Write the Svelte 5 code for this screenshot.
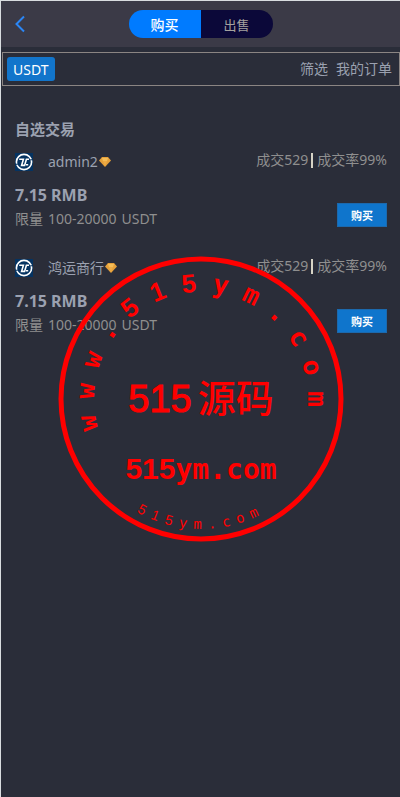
<script lang="ts">
    type Offer = {
        name: string;
        deals: number;
        rate: number;
        price: string;
        limit: string;
    };

    let mode = $state('buy');

    const offers: Offer[] = [
        { name: 'admin2', deals: 529, rate: 99, price: '7.15', limit: '100-20000' },
        { name: '鸿运商行', deals: 529, rate: 99, price: '7.15', limit: '100-20000' },
    ];

    // angle 0 is the top of the seal, clockwise
    const upper = [...'www.515ym.com'].map((char, i) => ({ char, angle: -102 + i * 16 }));
    // angle 0 is the bottom of the seal, counter-clockwise
    const lower = [...'515ym.com'].map((char, i) => ({ char, angle: 28 - i * 6.6 }));

    const isDigit = (char: string) => char >= '0' && char <= '9';
</script>

<div class="page">
    <header>
        <button class="back" aria-label="返回">
            <svg width="10" height="18" viewBox="0 0 10 18">
                <path d="M9 1.5 L1.5 9 L9 16.5" fill="none" stroke="#2b86f5" stroke-width="2" />
            </svg>
        </button>
        <div class="tabs">
            <button class:active={mode === 'buy'} onclick={() => (mode = 'buy')}>购买</button>
            <button class:active={mode === 'sell'} onclick={() => (mode = 'sell')}>出售</button>
        </div>
    </header>

    <nav>
        <button class="coin">USDT</button>
        <div class="links">
            <a href="#filter">筛选</a>
            <a href="#orders">我的订单</a>
        </div>
    </nav>

    <main>
        <h2>自选交易</h2>
        {#each offers as offer}
            <section class="offer">
                <div class="top">
                    <div class="seller">
                        <svg class="avatar" width="18" height="18" viewBox="0 0 18 18">
                            <rect width="18" height="18" fill="#053361" />
                            <circle cx="9" cy="9" r="7.6" fill="none" stroke="#fff" stroke-width="1.6" />
                            <path d="M0 11.5 L3 11 M15 7 L18 6.5" stroke="#053361" stroke-width="1.2" />
                            <path d="M4.2 6.2 H8.4 L6.6 12.4 H9.6 L11.4 6.2 H14 M11 11.8 H13.2" fill="none" stroke="#fff" stroke-width="1.6" />
                        </svg>
                        <span class="name">{offer.name}</span>
                        <svg class="gem" width="12" height="10" viewBox="0 0 12 10">
                            <path d="M3 0 H9 L12 3.5 L6 10 L0 3.5 Z" fill="#e5a03a" />
                            <path d="M3 1 H9 L8 4 H4 Z" fill="#f5bd58" />
                            <path d="M4 4 H8 L6 9 Z" fill="#eeab45" />
                        </svg>
                    </div>
                    <div class="stats">成交{offer.deals}<span class="bar"></span>成交率{offer.rate}%</div>
                </div>
                <div class="bottom">
                    <div>
                        <p class="price">{offer.price} RMB</p>
                        <p class="limit"><span>限量</span><span>{offer.limit}</span><span>USDT</span></p>
                    </div>
                    <button class="buy">购买</button>
                </div>
            </section>
        {/each}
    </main>

    <div class="seal">
        <svg width="286" height="286" viewBox="-143 -143 286 286" fill="#f00" text-anchor="middle">
            <circle r="140" fill="none" stroke="#f00" stroke-width="5" />
            {#each upper as { char, angle }}
                <text class="upper" class:digit={isDigit(char)} y="-107" transform="rotate({angle})">{char}</text>
            {/each}
            <text class="title" y="13"><tspan class="digit">515</tspan><tspan dx="6">源码</tspan></text>
            <text class="domain" y="80"><tspan class="digit">515</tspan>ym.com</text>
            {#each lower as { char, angle }}
                <text class="lower" class:digit={isDigit(char)} y="130" transform="rotate({angle})">{char}</text>
            {/each}
        </svg>
    </div>
</div>

<style>
    :global(body) {
        background: #2a2d39;
    }

    .page {
        position: relative;
        box-sizing: border-box;
        min-height: 100vh;
        border-top: 1px solid #d9dde0;
        border-left: 1px solid #d9dde0;
        background: #2a2d39;
        color: #9ba1b0;
        font-family: 'Noto Sans', 'Noto Sans CJK SC', sans-serif;
        font-size: 14px;
        line-height: 20px;
    }

    button {
        border: 0;
        padding: 0;
        font-family: inherit;
        cursor: pointer;
    }

    header {
        display: grid;
        grid-template-columns: 1fr auto 1fr;
        align-items: center;
        height: 46px;
        background: #3b3a47;
    }

    .back {
        display: flex;
        justify-self: start;
        padding: 0 14px;
        background: none;
    }

    .tabs {
        display: flex;
        overflow: hidden;
        border-radius: 14px;
    }

    .tabs button {
        width: 72px;
        height: 28px;
        background: #0b0839;
        color: #a5a29f;
        font-size: 13px;
    }

    .tabs .active {
        background: #007bff;
        color: #fff;
        font-size: 14px;
        font-weight: 500;
    }

    nav {
        display: flex;
        align-items: center;
        justify-content: space-between;
        box-sizing: border-box;
        height: 34px;
        margin: 5px 0 0 1px;
        padding: 0 7px 0 4px;
        border: 1px solid #8b8583;
    }

    .coin {
        height: 24px;
        padding: 0 6px;
        border-radius: 3px;
        background: #1275cb;
        color: #fff;
        font-size: 14px;
    }

    .links {
        display: flex;
        gap: 8px;
    }

    a {
        color: #9ba1b0;
        text-decoration: none;
    }

    main {
        padding: 33px 13px 0 14px;
    }

    h2 {
        margin: 0 0 11px;
        font-size: 15px;
        line-height: 20px;
    }

    .offer {
        margin-bottom: 24px;
    }

    .top {
        display: flex;
        align-items: flex-start;
        justify-content: space-between;
        margin-bottom: 9px;
    }

    .seller {
        display: flex;
        align-items: center;
        height: 24px;
    }

    .avatar {
        margin-right: 15px;
    }

    .gem {
        margin-left: 1px;
    }

    .stats {
        display: flex;
        align-items: center;
        color: #8f8f8f;
    }

    .bar {
        width: 2px;
        height: 15px;
        margin: 0 4px 0 3px;
        background: #d6d3c5;
    }

    .bottom {
        display: flex;
        align-items: flex-end;
        justify-content: space-between;
        height: 49px;
    }

    .bottom > div {
        align-self: flex-start;
    }

    p {
        margin: 0;
        line-height: 24px;
    }

    .price {
        font-size: 16px;
        font-weight: 700;
    }

    .limit {
        display: flex;
        gap: 5px;
        color: #8f8f8f;
    }

    .buy {
        box-sizing: border-box;
        width: 50px;
        height: 24px;
        margin-bottom: 5px;
        border: 1px solid #1c69ad;
        background: #0f75cc;
        color: #fff;
        font-size: 11px;
        font-weight: 700;
    }

    .seal {
        position: absolute;
        inset: 0;
        display: grid;
        place-items: center;
        pointer-events: none;
    }

    .seal text {
        font-family: 'DejaVu Sans Mono', monospace;
    }

    .seal .upper {
        font-size: 26px;
        font-weight: 700;
    }

    .seal .title {
        font-family: 'Noto Sans CJK SC', sans-serif;
        font-size: 38px;
        font-weight: 500;
    }

    .seal .title .digit {
        font-weight: 400;
        stroke: #f00;
    }

    .seal .domain {
        font-size: 28px;
        font-weight: 700;
    }

    .seal .domain .digit {
        font-size: 30px;
    }

    .seal .lower {
        font-size: 14px;
    }

    .seal .digit {
        font-family: 'Liberation Sans', sans-serif;
    }
</style>
